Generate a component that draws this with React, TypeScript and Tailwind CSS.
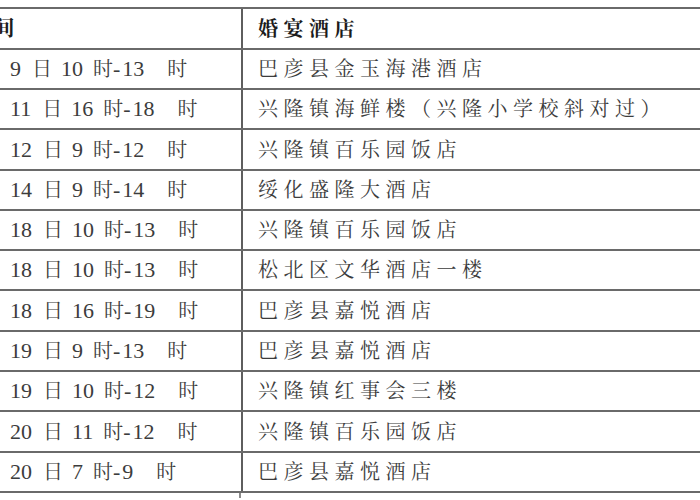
import React from "react";

const rows: { d: string; a: string; b: string; h: string; tall?: boolean }[] = [
  { d: "9", a: "10", b: "13", h: "巴彦县金玉海港酒店" },
  { d: "11", a: "16", b: "18", h: "兴隆镇海鲜楼（兴隆小学校斜对过）" },
  { d: "12", a: "9", b: "12", h: "兴隆镇百乐园饭店", tall: true },
  { d: "14", a: "9", b: "14", h: "绥化盛隆大酒店" },
  { d: "18", a: "10", b: "13", h: "兴隆镇百乐园饭店" },
  { d: "18", a: "10", b: "13", h: "松北区文华酒店一楼" },
  { d: "18", a: "16", b: "19", h: "巴彦县嘉悦酒店", tall: true },
  { d: "19", a: "9", b: "13", h: "巴彦县嘉悦酒店" },
  { d: "19", a: "10", b: "12", h: "兴隆镇红事会三楼" },
  { d: "20", a: "11", b: "12", h: "兴隆镇百乐园饭店", tall: true },
  { d: "20", a: "7", b: "9", h: "巴彦县嘉悦酒店" },
];

const font = {
  fontFamily:
    '"Liberation Serif", "Noto Serif CJK SC", "Noto Sans CJK SC", serif',
};

function TimeText({ d, a, b }: { d: string; a: string; b: string }) {
  return (
    <span className="flex items-center whitespace-nowrap text-[22px]">
      <span>{d}</span>
      <span className="ml-[11px] text-[20px]">日</span>
      <span className="ml-[9px]">{a}</span>
      <span className="ml-[10px] text-[20px]">时</span>
      <span>-</span>
      <span className="ml-[2px]">{b}</span>
      <span className="ml-[23px] text-[20px]">时</span>
    </span>
  );
}

export default function App() {
  return (
    <div
      className="w-[700px] h-[500px] overflow-hidden bg-white pt-[7px] text-[20px] leading-none text-[#3c3c3c]"
      style={font}
    >
      <div className="w-[760px] border-t-2 border-[#6a6a6a]">
        <div className="flex h-[41px] border-b-2 border-[#6a6a6a]">
          <div className="w-[243px] shrink-0 border-r-2 border-[#5e5e5e] flex items-center overflow-hidden">
            <span className="ml-[-32px] text-[21px] tracking-[4.5px] font-bold text-[#1c1c1c] whitespace-nowrap">
              时间
            </span>
          </div>
          <div className="flex-1 flex items-center pl-[15px]">
            <span className="tracking-[5.5px] font-bold text-[#1c1c1c] whitespace-nowrap">
              婚宴酒店
            </span>
          </div>
        </div>
        {rows.map((r, i) => (
          <div
            key={i}
            className={`flex border-b-2 border-[#6a6a6a] ${
              r.tall ? "h-[41px]" : "h-[40px]"
            }`}
          >
            <div className="w-[243px] shrink-0 border-r-2 border-[#5e5e5e] flex items-center pl-[10px]">
              <TimeText d={r.d} a={r.a} b={r.b} />
            </div>
            <div className="flex-1 flex items-center pl-[15px]">
              <span className="tracking-[5.5px] whitespace-nowrap">{r.h}</span>
            </div>
          </div>
        ))}
        <div className="flex h-[5px]">
          <div className="w-[241px] shrink-0 border-r-2 border-[#8a8a8a]" />
        </div>
      </div>
    </div>
  );
}
